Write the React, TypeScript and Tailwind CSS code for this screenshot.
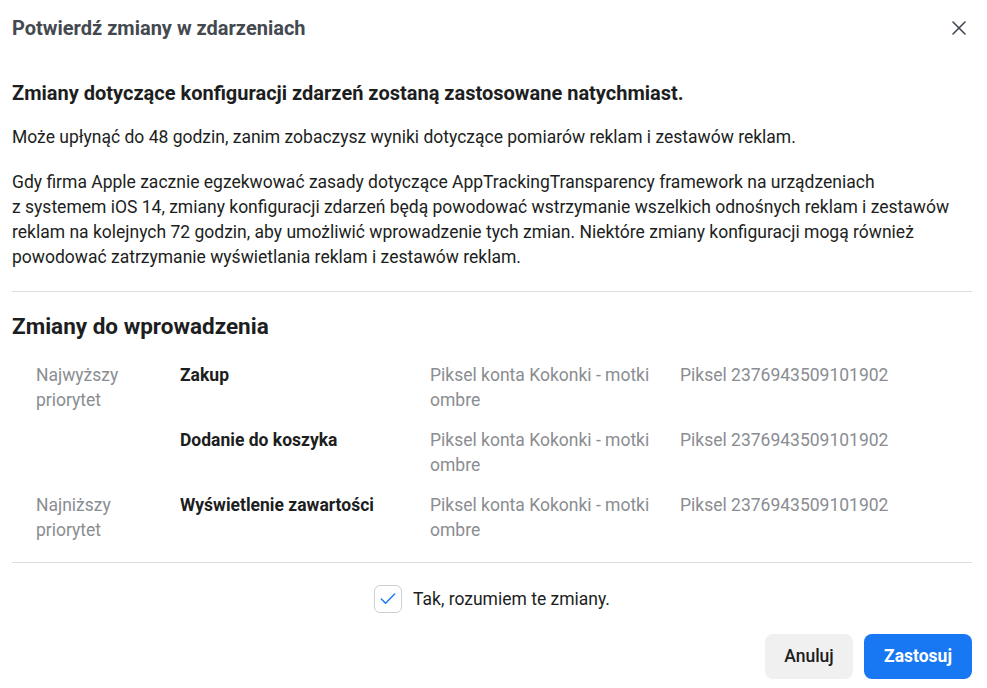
import { X, Check } from 'lucide-react'

const rows = [
  { priority: 'Najwyższy priorytet', event: 'Zakup', pixel: 'Piksel konta Kokonki - motki ombre', id: 'Piksel 2376943509101902' },
  { priority: '', event: 'Dodanie do koszyka', pixel: 'Piksel konta Kokonki - motki ombre', id: 'Piksel 2376943509101902' },
  { priority: 'Najniższy priorytet', event: 'Wyświetlenie zawartości', pixel: 'Piksel konta Kokonki - motki ombre', id: 'Piksel 2376943509101902' },
]

export default function App() {
  return (
    <div className="min-h-[688px] w-[987px] bg-white pl-3 pr-[15px] font-['Roboto',sans-serif] text-[#1c1e21]">
      <div className="flex h-[56px] items-center justify-between">
        <h1 className="text-[20px] font-bold text-[#444950]">Potwierdź zmiany w zdarzeniach</h1>
        <button className="mr-[1px] text-[#444950]">
          <X size={24} strokeWidth={1.6} />
        </button>
      </div>

      <div className="pt-[23px] pb-[21px]">
        <p className="text-[20px] font-bold leading-[28px]">Zmiany dotyczące konfiguracji zdarzeń zostaną zastosowane natychmiast.</p>
        <p className="mt-[18px] text-[17.5px] leading-[25px]">
          Może upłynąć do 48 godzin, zanim zobaczysz wyniki dotyczące pomiarów reklam i zestawów reklam.
        </p>
        <p className="mt-[20px] max-w-[945px] text-[17.5px] leading-[25px]">
          Gdy firma Apple zacznie egzekwować zasady dotyczące AppTrackingTransparency framework na urządzeniach z{'\u00a0'}systemem iOS 14, zmiany konfiguracji zdarzeń będą powodować wstrzymanie wszelkich odnośnych reklam i zestawów reklam na kolejnych 72 godzin, aby umożliwić wprowadzenie tych zmian. Niektóre zmiany konfiguracji mogą również powodować zatrzymanie wyświetlania reklam i zestawów reklam.
        </p>
      </div>

      <div className="border-t border-[#dadde1]" />

      <h2 className="mt-[19px] text-[22.5px] font-bold leading-[30px]">Zmiany do wprowadzenia</h2>

      <div className="mt-[22px] pl-6 pb-[4px]">
        {rows.map((r) => (
          <div key={r.event} className="grid grid-cols-[144px_250px_250px_1fr] pb-[15px] text-[17.5px] leading-[25px]">
            <div className="w-[100px] text-[#8a8d91]">{r.priority}</div>
            <div className="font-bold">{r.event}</div>
            <div className="w-[240px] text-[#8a8d91]">{r.pixel}</div>
            <div className="text-[#8a8d91]">{r.id}</div>
          </div>
        ))}
      </div>

      <div className="border-t border-[#dadde1]" />

      <div className="mt-[22px] flex items-center justify-center gap-[11px]">
        <div className="flex h-[28px] w-[28px] items-center justify-center rounded-[6px] border border-[#ccd0d5] text-[#1877f2]">
          <Check size={20} strokeWidth={1.75} />
        </div>
        <span className="text-[17.5px]">Tak, rozumiem te zmiany.</span>
      </div>

      <div className="mt-[21px] flex justify-end gap-[11px]">
        <button className="h-[45px] w-[88px] rounded-[8px] bg-[#f0f0f0] text-[17.5px] font-medium text-[#1c1e21]">Anuluj</button>
        <button className="h-[45px] w-[108px] rounded-[8px] bg-[#1877f2] text-[17.5px] font-bold text-white">Zastosuj</button>
      </div>
    </div>
  )
}
